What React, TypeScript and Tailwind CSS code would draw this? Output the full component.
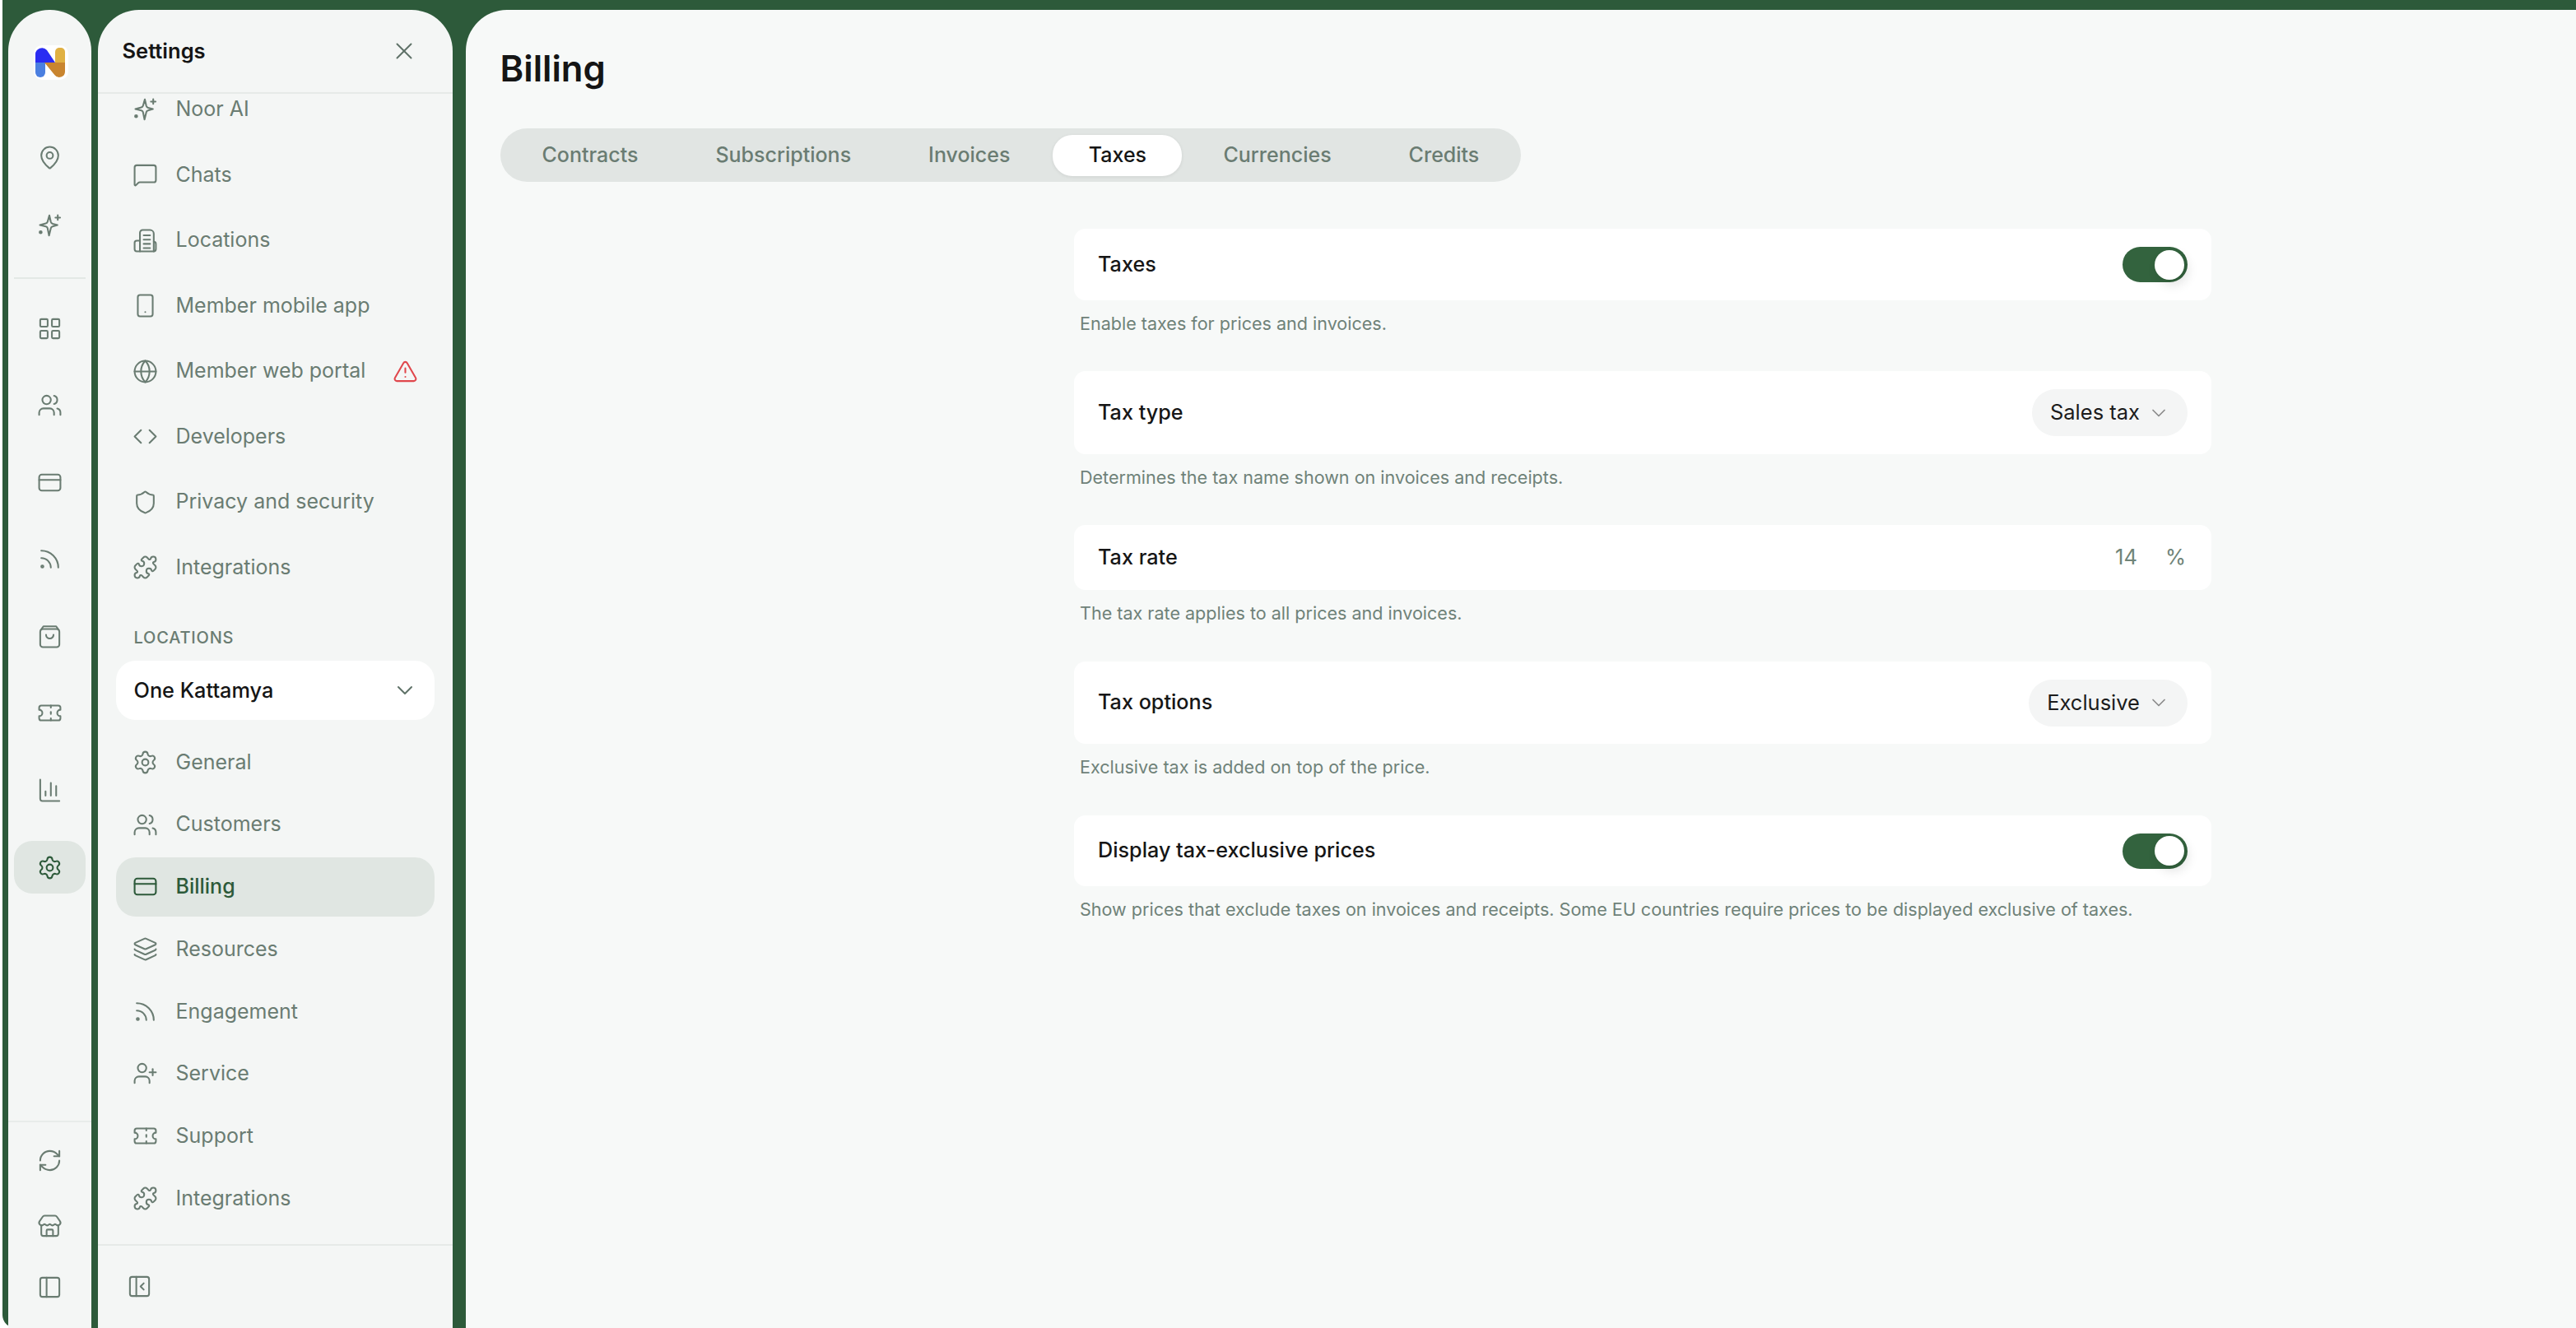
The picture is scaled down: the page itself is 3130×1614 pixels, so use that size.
import React from "react";
import {
  MapPin, MessageSquare, Smartphone, Globe, TriangleAlert, Code, Shield, Puzzle, ChevronDown, Settings, Users,
  Layers, Rss, UserPlus, Ticket, RefreshCw, Store, PanelLeft, LayoutGrid, PanelLeftClose, X,
} from "lucide-react";

type IconProps = { className?: string; size?: number; strokeWidth?: number };

function Spark({ className, size = 31, strokeWidth = 1.6 }: IconProps) {
  return (
    <svg width={size} height={size} viewBox="0 0 24 24" fill="none" stroke="currentColor" strokeWidth={strokeWidth} strokeLinecap="round" strokeLinejoin="round" className={className}>
      <path d="M11.6 2.2 13 8.4c.2.8.8 1.4 1.6 1.6l4.6 1.2-4.6 1.3c-.8.2-1.4.8-1.6 1.6l-1.7 7-1.400-6.900c-.2-.8-.8-1.4-1.600-1.600l-5.600-1.400 5.600-1.500c.8-.2 1.400-.8 1.600-1.600z" />
      <path d="M19.500 2v4.400M17.300 4.200h4.400" />
      <circle cx="3.400" cy="18" r="1" fill="currentColor" />
    </svg>
  );
}
function Building({ className, size = 31, strokeWidth = 1.6 }: IconProps) {
  return (
    <svg width={size} height={size} viewBox="0 0 24 24" fill="none" stroke="currentColor" strokeWidth={strokeWidth} strokeLinecap="round" strokeLinejoin="round" className={className}>
      <path d="M7 22V4.500A2.500 2.500 0 0 1 9.500 2h7A3.500 3.500 0 0 1 20 5.500V22" />
      <path d="M7 12H4a2 2 0 0 0-2 2v6a2 2 0 0 0 2 2h16a2 2 0 0 0 2-2v-5a2 2 0 0 0-2-2" />
      <path d="M10.500 7h6M10.500 11h6M10.500 15h6M10.500 19h6" />
    </svg>
  );
}
function Bag({ className, size = 31, strokeWidth = 1.6 }: IconProps) {
  return (
    <svg width={size} height={size} viewBox="0 0 24 24" fill="none" stroke="currentColor" strokeWidth={strokeWidth} strokeLinecap="round" strokeLinejoin="round" className={className}>
      <rect x="3" y="5" width="18" height="17" rx="2.500" />
      <path d="M3.500 6 6 2.500h12L20.500 6" />
      <path d="M8.500 10.500a3.500 3.500 0 0 0 7 0" />
    </svg>
  );
}
function Chart({ className, size = 31, strokeWidth = 1.6 }: IconProps) {
  return (
    <svg width={size} height={size} viewBox="0 0 24 24" fill="none" stroke="currentColor" strokeWidth={strokeWidth} strokeLinecap="round" strokeLinejoin="round" className={className}>
      <path d="M3 2v18a2 2 0 0 0 2 2h16" />
      <path d="M8 17v-4M13 17V5M18 17V8" />
    </svg>
  );
}
function Card({ className, size = 31, strokeWidth = 1.6 }: IconProps) {
  return (
    <svg width={size} height={size} viewBox="0 0 24 24" fill="none" stroke="currentColor" strokeWidth={strokeWidth} strokeLinecap="round" strokeLinejoin="round" className={className}>
      <rect x="2" y="4.500" width="20" height="15" rx="2.500" />
      <path d="M2 9.500h20" />
    </svg>
  );
}
function Logo() {
  return (
    <svg width="42" height="42" viewBox="0 0 42 42">
      <rect width="42" height="42" rx="10" fill="#ffffff" />
      <path d="M2 11a8 8 0 0 1 14-5L26 21H2z" fill="#2a2cf2" />
      <path d="M2 21h12v12a6 6 0 0 1-12 0z" fill="#4b7fe0" />
      <path d="M26 8a5 5 0 0 1 5-5h2a5 5 0 0 1 5 5v13H26z" fill="#e0b143" />
      <path d="M13 21h25v11a7 7 0 0 1-12.500 4.300z" fill="#c9852f" />
    </svg>
  );
}

const upper = [
  { icon: Spark, label: "Noor AI" },
  { icon: MessageSquare, label: "Chats" },
  { icon: Building, label: "Locations" },
  { icon: Smartphone, label: "Member mobile app" },
  { icon: Globe, label: "Member web portal", warn: true },
  { icon: Code, label: "Developers" },
  { icon: Shield, label: "Privacy and security" },
  { icon: Puzzle, label: "Integrations" },
];
const lower = [
  { icon: Settings, label: "General" },
  { icon: Users, label: "Customers" },
  { icon: Card, label: "Billing", active: true },
  { icon: Layers, label: "Resources" },
  { icon: Rss, label: "Engagement" },
  { icon: UserPlus, label: "Service" },
  { icon: Ticket, label: "Support" },
  { icon: Puzzle, label: "Integrations" },
];
const railItems = [Card, Rss, Bag, Ticket, Chart];
const tabs = ["Contracts", "Subscriptions", "Invoices", "Taxes", "Currencies", "Credits"];

function Toggle() {
  return (
    <div className="flex h-[43px] w-[79px] items-center justify-end rounded-full bg-[#33633e] pr-[4px]">
      <div className="h-[36px] w-[36px] rounded-full bg-white shadow-[4px_6px_14px_rgba(0,0,0,0.12)]" />
    </div>
  );
}
function Select({ label }: { label: string }) {
  return (
    <div className="flex h-[57px] items-center rounded-full bg-[#f4f5f5] pl-[22px] pr-[21px] text-[25.5px] text-[#1c1c1c]">
      <span>{label}</span>
      <ChevronDown size={28} strokeWidth={1.5} className="ml-[9px] text-[#8b8b8b]" />
    </div>
  );
}
function Row({ title, h, desc, mb, children }: { title: string; h: string; desc: string; mb: string; children: React.ReactNode }) {
  return (
    <div className={mb}>
      <div className={`flex items-center justify-between rounded-[14px] bg-white pl-[29px] pr-[29px] ${h}`}>
        <span className="text-[25.2px] font-medium text-[#161616]">{title}</span>
        {children}
      </div>
      <p className="mt-[15px] pl-[7px] text-[21.55px] leading-[27px] text-[#6f8279]">{desc}</p>
    </div>
  );
}

export default function App() {
  return (
    <div className="h-[1614px] w-[3130px] overflow-hidden bg-white font-['Inter',sans-serif]">
      <div className="ml-[3px] flex h-full items-stretch rounded-bl-[16px] bg-[#2d5a3a] pl-[7px] pt-[12px]">
        {/* rail */}
        <aside className="flex w-[101px] shrink-0 flex-col rounded-t-[50px] bg-[#f4f6f5] text-[#6a7c72]">
          <div className="flex flex-1 flex-col items-center">
            <div className="ml-[2px] mt-[43px]"><Logo /></div>
            <div className="mt-[62px] flex h-[64px] w-[87px] items-center justify-center"><MapPin size={31} strokeWidth={1.6} /></div>
            <div className="mt-[19px] flex h-[64px] w-[87px] items-center justify-center"><Spark /></div>
            <div className="mt-[31px] h-[2px] w-[87px] bg-[#e3e8e5]" />
            <div className="mt-[28px] flex flex-col gap-[29.6px]">
              <div className="flex h-[64px] w-[87px] items-center justify-center"><LayoutGrid size={31} strokeWidth={1.6} /></div>
              <div className="flex h-[64px] w-[87px] items-center justify-center"><Users size={31} strokeWidth={1.6} /></div>
              {railItems.map((I, i) => (
                <div key={i} className="flex h-[64px] w-[87px] items-center justify-center"><I size={31} strokeWidth={1.6} /></div>
              ))}
              <div className="flex h-[64px] w-[87px] items-center justify-center rounded-[22px] bg-[#e0e6e2] text-[#2d5a3a]"><Settings size={31} strokeWidth={1.6} /></div>
            </div>
          </div>
          <div className="flex h-[252px] flex-col items-center border-t-2 border-[#e8ecea] pt-[14px]">
            <div className="flex h-[64px] items-center"><RefreshCw size={31} strokeWidth={1.6} /></div>
            <div className="mt-[16px] flex h-[64px] items-center"><Store size={31} strokeWidth={1.6} /></div>
            <div className="mt-[10px] flex h-[64px] items-center"><PanelLeft size={31} strokeWidth={1.6} /></div>
          </div>
        </aside>

        {/* settings panel */}
        <aside className="ml-[7.500px] flex w-[431px] shrink-0 flex-col overflow-hidden rounded-t-[50px] bg-[#f4f6f5]">
          <header className="flex h-[102px] shrink-0 items-center justify-between border-b-2 border-[#e6eae8] pl-[30px] pr-[42px]">
            <span className="text-[25.5px] font-semibold text-[#151515]">Settings</span>
            <X size={34} strokeWidth={1.4} className="text-[#5f7268]" />
          </header>
          <div className="flex-1 overflow-hidden px-[22px]">
            <nav className="-mt-[17px] flex flex-col gap-[7.5px]">
              {upper.map(({ icon: I, label, warn }) => (
                <div key={label} className="flex h-[72px] items-center pl-[20px] pr-[20px] text-[25px] text-[#6a7c72]">
                  <I size={31} strokeWidth={1.6} className="shrink-0" />
                  <span className="ml-[22px]">{label}</span>
                  {warn && <TriangleAlert size={31} strokeWidth={1.6} className="ml-auto text-[#e0474c]" />}
                </div>
              ))}
            </nav>
            <div className="mt-[36.5px] pl-[22px] text-[20px] font-medium leading-[26px] tracking-[0.8px] text-[#6a7c72]">LOCATIONS</div>
            <div className="mt-[15px] flex h-[72px] items-center justify-between rounded-[24px] bg-white pl-[22px] pr-[20px]">
              <span className="text-[25.3px] font-medium text-[#151515]">One Kattamya</span>
              <ChevronDown size={32} strokeWidth={1.5} className="text-[#5f7268]" />
            </div>
            <nav className="mt-[15.5px] flex flex-col gap-[3.7px]">
              {lower.map(({ icon: I, label, active }) => (
                <div key={label + "l"} className={`flex h-[72px] items-center rounded-[24px] pl-[20px] pr-[20px] text-[25px] ${active ? "bg-[#e0e6e2] font-medium text-[#2d5a3a]" : "text-[#6a7c72]"}`}>
                  <I size={31} strokeWidth={1.6} className="shrink-0" />
                  <span className="ml-[22px]">{label}</span>
                </div>
              ))}
            </nav>
          </div>
          <div className="flex h-[102px] shrink-0 items-start border-t-2 border-[#e6eae8] pl-[35px] pt-[34px] text-[#6a7c72]">
            <PanelLeftClose size={31} strokeWidth={1.6} />
          </div>
        </aside>

        {/* main */}
        <main className="ml-[16px] min-w-0 flex-1 rounded-tl-[50px] bg-[#f7f9f8]">
          <h1 className="ml-[42px] mt-[43px] text-[43.600px] font-semibold leading-[58px] text-[#151515]">Billing</h1>
          <div className="ml-[42px] mt-[43px] inline-flex h-[65px] items-center rounded-full bg-[#e1e5e3] px-[4px]">
            {tabs.map((t) =>
              t === "Taxes" ? (
                <div key={t} className="ml-[5px] mr-[3px] flex h-[50px] w-[157px] items-center justify-center rounded-[24px] bg-white text-[25px] font-medium text-[#151515] shadow-[0_1px_4px_rgba(0,0,0,0.08)]">{t}</div>
              ) : (
                <div key={t} className="px-[47px] text-[25px] font-medium text-[#6a7c72]">{t}</div>
              )
            )}
          </div>
          <div className="ml-[739.5px] mt-[57px] w-[1382px]">
            <Row title="Taxes" h="h-[87px]" mb="mb-[44px]" desc="Enable taxes for prices and invoices."><Toggle /></Row>
            <Row title="Tax type" h="h-[101px]" mb="mb-[44px]" desc="Determines the tax name shown on invoices and receipts."><Select label="Sales tax" /></Row>
            <Row title="Tax rate" h="h-[79px]" mb="mb-[45px]" desc="The tax rate applies to all prices and invoices.">
              <div className="flex items-center pr-[2px] text-[25.5px] text-[#6f8478]">
                <span>14</span>
                <span className="ml-[34px]">%</span>
              </div>
            </Row>
            <Row title="Tax options" h="h-[100px]" mb="mb-[45px]" desc="Exclusive tax is added on top of the price."><Select label="Exclusive" /></Row>
            <Row title="Display tax-exclusive prices" h="h-[86px]" mb="" desc="Show prices that exclude taxes on invoices and receipts. Some EU countries require prices to be displayed exclusive of taxes."><Toggle /></Row>
          </div>
        </main>
      </div>
    </div>
  );
}
